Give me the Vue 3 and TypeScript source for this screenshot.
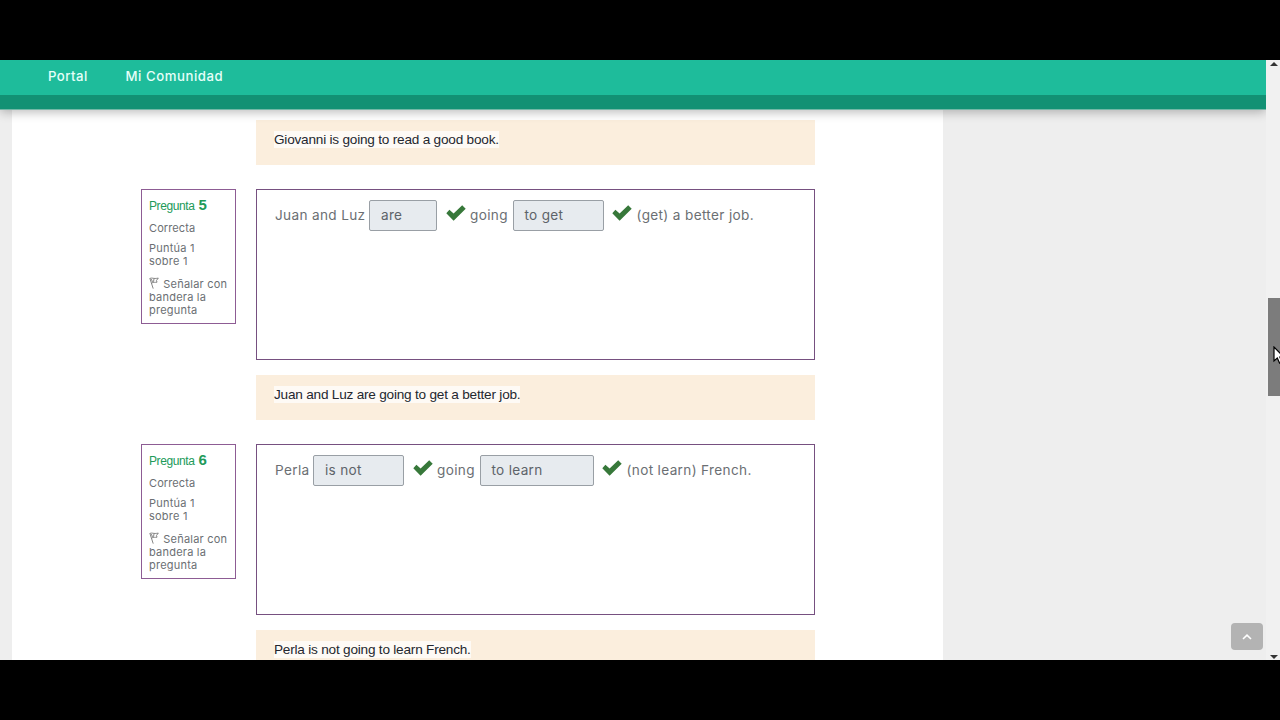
<script setup lang="ts">
interface Segment {
  kind: 'text' | 'answer'
  value: string
  width: number
}

interface Question {
  number: number
  segments: Segment[]
  feedback: string
}

const questions: Question[] = [
  {
    number: 5,
    segments: [
      { kind: 'text', value: 'Juan and Luz', width: 94 },
      { kind: 'answer', value: 'are', width: 68 },
      { kind: 'text', value: 'going', width: 43 },
      { kind: 'answer', value: 'to get', width: 91 },
      { kind: 'text', value: '(get) a better job.', width: 120 },
    ],
    feedback: 'Juan and Luz are going to get a better job.',
  },
  {
    number: 6,
    segments: [
      { kind: 'text', value: 'Perla', width: 38 },
      { kind: 'answer', value: 'is not', width: 91 },
      { kind: 'text', value: 'going', width: 43 },
      { kind: 'answer', value: 'to learn', width: 114 },
      { kind: 'text', value: '(not learn) French.', width: 128 },
    ],
    feedback: 'Perla is not going to learn French.',
  },
]
</script>

<template>
  <div class="stage">
    <div class="viewport">
      <div class="page">
        <header class="header">
          <nav class="nav">
            <a class="portal">Portal</a>
            <a class="community">Mi Comunidad</a>
          </nav>
          <div class="stripe"></div>
        </header>
        <main class="content">
          <div class="feedback first"><span>Giovanni is going to read a good book.</span></div>
          <section v-for="q in questions" :key="q.number" class="question">
            <aside class="info">
              <h3>Pregunta <b>{{ q.number }}</b></h3>
              <p class="state">Correcta</p>
              <p>Puntúa 1<br />sobre 1</p>
              <p class="flag">
                <svg width="10" height="12" viewBox="0 0 10 12">
                  <path d="M.8 1.1 4.2 11.6M1 1.5C3 .3 4.2 2.2 9.3 1.1L7.5 3.4 8 5.2C5.8 5.7 4.7 4.7 2.7 6.1M2.4 2.1 3.5 5M5 1.8 4.5 4.8" />
                </svg>
                Señalar con<br />bandera la<br />pregunta
              </p>
            </aside>
            <div class="body">
              <div class="formulation">
                <template v-for="(s, i) in q.segments" :key="i">
                  <span v-if="s.kind === 'text'" class="words" :style="{ width: s.width + 'px' }">{{ s.value }}</span>
                  <template v-else>
                    <span class="answer" :style="{ width: s.width + 'px' }">{{ s.value }}</span>
                    <svg class="check" width="20" height="16" viewBox="0 0 20 16">
                      <path d="M.3 8.2 3.4 4.7 7.6 8.6 16.2.3 19.7 3.8 7.6 15.7Z" />
                    </svg>
                  </template>
                </template>
              </div>
              <div class="feedback"><span>{{ q.feedback }}</span></div>
            </div>
          </section>
        </main>
        <button class="top" aria-label="Subir">
          <svg width="10" height="6" viewBox="0 0 10 6"><path d="M1 5 5 1.2 9 5" /></svg>
        </button>
      </div>
      <div class="scrollbar">
        <svg class="arrow" width="8" height="4" viewBox="0 0 8 4"><path d="M0 4 4 0 8 4Z" /></svg>
        <div class="thumb"></div>
        <svg class="arrow down" width="8" height="4" viewBox="0 0 8 4"><path d="M0 0H8L4 4Z" /></svg>
      </div>
      <svg class="cursor" width="12" height="19" viewBox="0 0 12 19">
        <path d="M1 1V15L4.3 12 6.6 17.2 9 16.1 6.8 11.1H11Z" />
      </svg>
    </div>
  </div>
</template>

<style>
body {
  margin: 0;
  overflow: hidden;
  background: #000;
}
</style>

<style scoped>
.stage {
  box-sizing: border-box;
  width: 1280px;
  height: 720px;
  padding: 60px 0;
  background: #000;
}
.viewport {
  position: relative;
  display: flex;
  height: 600px;
  overflow: hidden;
  background: #eee;
}
.page {
  position: relative;
  width: 1266px;
  height: 600px;
  overflow: hidden;
  font-family: Inter, "Open Sans", sans-serif;
  color: #6b6f73;
}
.header {
  position: relative;
  z-index: 1;
  height: 49px;
  border-bottom: 1px solid #73b8a7;
  background: #1ebc9b;
  box-shadow: 0 2px 10px rgba(0, 0, 0, 0.28);
}
.nav {
  box-sizing: border-box;
  display: flex;
  gap: 37px;
  height: 35px;
  padding-left: 48px;
  font-size: 13.2px;
  font-weight: 500;
  line-height: 32px;
  color: #e6fff9;
}
.portal {
  width: 40.5px;
  letter-spacing: 0.45px;
}
.community {
  letter-spacing: 0.55px;
}
.stripe {
  height: 14px;
  background: #129174;
}
.content {
  box-sizing: border-box;
  width: 931px;
  height: 551px;
  margin-left: 12px;
  padding: 10px 128px 0 129px;
  background: #fff;
}
.feedback {
  box-sizing: border-box;
  height: 45px;
  padding: 11px 18px;
  background: #fbeedd;
  font-family: "Liberation Sans", Arial, sans-serif;
  font-size: 13.6px;
  letter-spacing: -0.21px;
  line-height: 17px;
  color: #24272f;
  white-space: nowrap;
}
.feedback span {
  display: inline-block;
  background: rgba(255, 255, 255, 0.7);
}
.first {
  margin-left: 115px;
  width: 559px;
}
.question {
  display: flex;
  gap: 20px;
  margin-top: 24px;
}
.info {
  box-sizing: border-box;
  flex: none;
  width: 95px;
  height: 135px;
  padding: 7px 0 0 7px;
  border: 1px solid #8d5c94;
  font-size: 11px;
  letter-spacing: 0.22px;
  line-height: 13px;
  white-space: nowrap;
}
.info h3 {
  margin: 0;
  font-family: "Liberation Sans", Arial, sans-serif;
  font-size: 12px;
  font-weight: 400;
  letter-spacing: -0.4px;
  line-height: 15px;
  color: #219a59;
}
.info b {
  margin-left: 1px;
  font-size: 15px;
}
.info p {
  margin: 8px 0 0;
}
.info .state {
  margin-bottom: -1px;
  letter-spacing: 0.1px;
}
.info .flag {
  margin-top: 10px;
}
.info svg {
  height: 12px;
  margin: -2px 1px 0 0;
  vertical-align: -1px;
  fill: none;
  stroke: #777;
  stroke-width: 0.9;
}
.body {
  width: 559px;
}
.formulation {
  box-sizing: border-box;
  display: flex;
  height: 171px;
  margin-bottom: 15px;
  padding: 10px 0 0 18px;
  border: 1px solid #765080;
  font-size: 13.6px;
  line-height: 31px;
  white-space: nowrap;
}
.words {
  flex: none;
  letter-spacing: 0.34px;
}
.answer {
  box-sizing: border-box;
  flex: none;
  height: 31px;
  padding-left: 11px;
  border: 1px solid #999fa5;
  border-radius: 2px;
  background: #e7ebef;
  letter-spacing: 0.3px;
  line-height: 29px;
  color: #5d6369;
}
.check {
  flex: none;
  margin: 5px 4px 0 8.5px;
  fill: #37783a;
}
.check + .words {
  margin-left: 0.5px;
  margin-right: -0.5px;
}
.top {
  position: absolute;
  right: 3px;
  bottom: 10px;
  display: flex;
  align-items: center;
  justify-content: center;
  width: 32px;
  height: 27px;
  padding: 0;
  border: 0;
  border-radius: 4px;
  background: #b3b3b3;
}
.top svg {
  fill: none;
  stroke: #fff;
  stroke-width: 1.6;
}
.scrollbar {
  box-sizing: border-box;
  display: flex;
  flex-direction: column;
  align-items: center;
  width: 14px;
  height: 600px;
  padding: 2px 0 1px 2px;
  background: #f1f1f1;
}
.arrow {
  fill: #333;
}
.thumb {
  width: 12px;
  height: 98px;
  margin-top: 232px;
  background: #7c7c7c;
}
.down {
  margin-top: auto;
}
.cursor {
  position: absolute;
  left: 1273px;
  top: 286px;
  fill: #fff;
  stroke: #000;
  stroke-width: 1.2;
}
</style>
